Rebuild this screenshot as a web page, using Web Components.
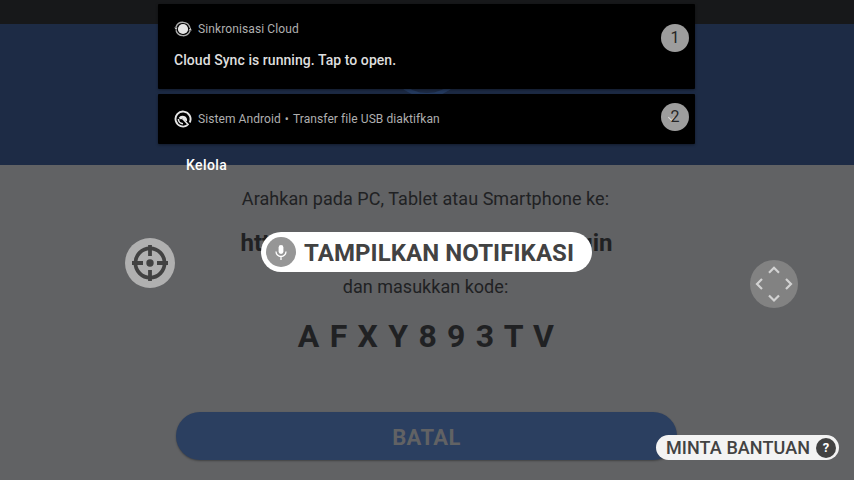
<!DOCTYPE html>
<html lang="id"><head><meta charset="utf-8"><title>Cloud Login</title>
<style>html,body{margin:0;width:854px;height:480px;overflow:hidden;background:#616264;font-family:Roboto,"Liberation Sans",sans-serif}</style>
</head><body><cloud-screen></cloud-screen>
<script>
const define=(name,html)=>{
  const t=document.createElement('template');t.innerHTML=html;
  customElements.define(name,class extends HTMLElement{
    constructor(){super();this.attachShadow({mode:'open'}).append(t.content.cloneNode(true));}
  });
};
define('login-page',`<style>
:host{display:flex;flex-direction:column;width:854px;height:480px;background:#616264;color:#202123;overflow:hidden}
.status{height:24px;background:#17181a;flex:none}
header{height:141px;background:#1d2b45;flex:none;display:flex;justify-content:center}
header svg{display:block}
main{display:flex;flex-direction:column;align-items:center;width:853px;white-space:nowrap}
p{margin:0}
.lead{font-size:18px;line-height:24px;margin-top:22px;letter-spacing:.05px;margin-right:2px}
.url{display:flex;justify-content:space-between;width:372px;font-size:24px;line-height:30px;font-weight:700;margin-top:17px}
.then{font-size:18px;line-height:24px;margin-top:17px;letter-spacing:.03px;margin-right:2px}
.code{font-size:32px;line-height:38px;font-weight:700;margin-top:18px;letter-spacing:1.2px}
button{font:700 22px/28px Roboto,sans-serif;color:#616264;background:#2b3f60;border:0;border-radius:24px;width:501px;height:48px;margin-top:57px;padding:3px 0 0;box-shadow:0 1px 2px #0005;letter-spacing:.4px}
</style><div class="status"></div><header><svg width="80" height="90"><circle cx="40" cy="33" r="38" fill="none" stroke="#253b61" stroke-width="4"/></svg></header>
<main><p class="lead">Arahkan pada PC, Tablet atau Smartphone ke:</p><p class="url"><span>htt</span><span>gin</span></p><p class="then">dan masukkan kode:</p><p class="code">A F X Y 8 9 3 T V</p><button>BATAL</button></main>`);
define('notice-card',`<style>
:host{display:flex;flex-direction:column;box-sizing:border-box;background:#000;border-radius:1px;padding:16px 6px 0 16px;position:relative;box-shadow:0 1px 3px #0006}
.row{display:flex;align-items:center;height:18px;gap:6px;color:#afafaf;font-size:12px;line-height:18px;letter-spacing:.11px;white-space:nowrap}
.body{font-size:14px;line-height:20px;font-weight:500;color:#dedede;margin-top:12px;letter-spacing:.06px}
::slotted(svg){display:block;width:18px;height:18px;flex:none}
</style><div class="row"><slot name="icon"></slot><slot name="title"></slot></div><div class="body"><slot></slot></div><slot name="badge"></slot>`);
define('number-badge',`<style>:host{position:absolute;right:6px;width:28px;height:28px;border-radius:50%;background:#9d9d9d;color:#252525;display:grid;place-items:center;font-size:16px;line-height:20px}
:host([checked])::before{content:"";position:absolute;left:8px;top:12px;width:4px;height:4px;border:solid #ddd;border-width:0 1px 1px 0;transform:rotate(45deg)}span{position:relative}</style><span><slot></slot></span>`);
define('notice-shade',`<style>
:host{display:flex;flex-direction:column;gap:5px;position:absolute;left:158px;top:4px;width:537px}
.one{height:85px}.two{height:50px}.manage{font-size:14px;font-weight:500;line-height:20px;color:#fff;margin:6px 0 0 28px;letter-spacing:.4px}
.dot{margin:0 4px}
</style>
<notice-card class="one"><svg slot="icon" viewBox="0 0 18 18" fill="none" stroke="#aaa" stroke-width="1.4"><circle cx="9" cy="9" r="5.1" fill="#e4e4e4" stroke="none"/><path d="M1.9 7.2A7.4 7.4 0 0 1 16 7.8M16.1 10.8A7.4 7.4 0 0 1 2 10.2"/><path d="M.3 7.5h3.2l-1.3 2.8zM14.5 10.4h3.2l-1.3-2.8z" fill="#ccc" stroke="none"/></svg><span slot="title">Sinkronisasi Cloud</span>Cloud Sync is running. Tap to open.<number-badge slot="badge" style="top:20px">1</number-badge></notice-card>
<notice-card class="two"><svg slot="icon" viewBox="0 0 18 18" fill="none" stroke="#e5e5e5"><path d="M13.6 15A7.5 7.5 0 1 1 15.7 12.5" stroke-width="1.9"/><path d="M4.6 7.9A4.6 4.6 0 0 1 13 11.2L10.8 10.5 8.8 8.5 7 9.5z" fill="#e5e5e5" stroke="none"/><path d="M4.4 9A4.7 4.7 0 0 0 9 13.7M8.5 8.5 14.6 15" stroke-width="1.6"/></svg><span slot="title" style="letter-spacing:.08px">Sistem Android<span class="dot">•</span>Transfer file USB diaktifkan</span><number-badge checked slot="badge" style="top:9px">2</number-badge></notice-card>
<div class="manage">Kelola</div>`);
define('voice-command',`<style>:host{position:absolute;left:261px;top:232px;width:331px;height:40px;border-radius:20px;background:#fff;color:#424242;display:flex;align-items:center;box-sizing:border-box;padding-left:5px;gap:8px;white-space:nowrap;font-size:24px;font-weight:700;line-height:40px;letter-spacing:.08px}
svg{flex:none}span{padding-top:2px}</style><svg width="30" height="30"><circle cx="15" cy="15" r="15" fill="#969696"/><rect x="12.6" y="8" width="4.8" height="9" rx="2.4" fill="#fff"/><path d="M10 14.5a5 5 0 0 0 10 0M15 19.5V23" fill="none" stroke="#fff" stroke-width="1.3"/></svg><span><slot></slot></span>`);
define('help-command',`<style>:host{position:absolute;left:656px;top:435px;width:183px;height:25px;border-radius:13px;background:#f3f3f3;color:#424242;display:flex;align-items:center;justify-content:space-between;box-sizing:border-box;padding:0 3px 0 10px;font-size:18px;font-weight:500;line-height:25px;white-space:nowrap;letter-spacing:.08px}
i{width:20px;height:20px;border-radius:50%;background:#424242;color:#fff;font:700 13px/20px Roboto,sans-serif;text-align:center}</style><slot></slot><i>?</i>`);
define('target-control',`<style>:host{position:absolute;left:125px;top:238px}svg{display:block}</style><svg width="50" height="50"><circle cx="25" cy="25" r="25" fill="#b0b0b0"/><g stroke="#424242" fill="none" stroke-width="3.8"><circle cx="25" cy="25" r="14.6"/><path d="M25 7v11M25 32v11M7 25h11M32 25h11"/></g><circle cx="25" cy="25" r="3.7" fill="#424242"/></svg>`);
define('scroll-control',`<style>:host{position:absolute;left:750px;top:260px}svg{display:block}</style><svg width="48" height="48"><circle cx="24" cy="24" r="24" fill="#828282"/><path d="M19 12.8l5-5 5 5M19 35.5l5 5 5-5M12 19l-5 5 5 5M36 19l5 5-5 5" fill="none" stroke="#d2d2d2" stroke-width="2.2"/></svg>`);
define('cloud-screen',`<style>:host{display:block;position:relative;width:854px;height:480px;overflow:hidden}</style><login-page></login-page><notice-shade></notice-shade><target-control></target-control><voice-command>TAMPILKAN NOTIFIKASI</voice-command><scroll-control></scroll-control><help-command>MINTA BANTUAN</help-command>`);
</script></body></html>
